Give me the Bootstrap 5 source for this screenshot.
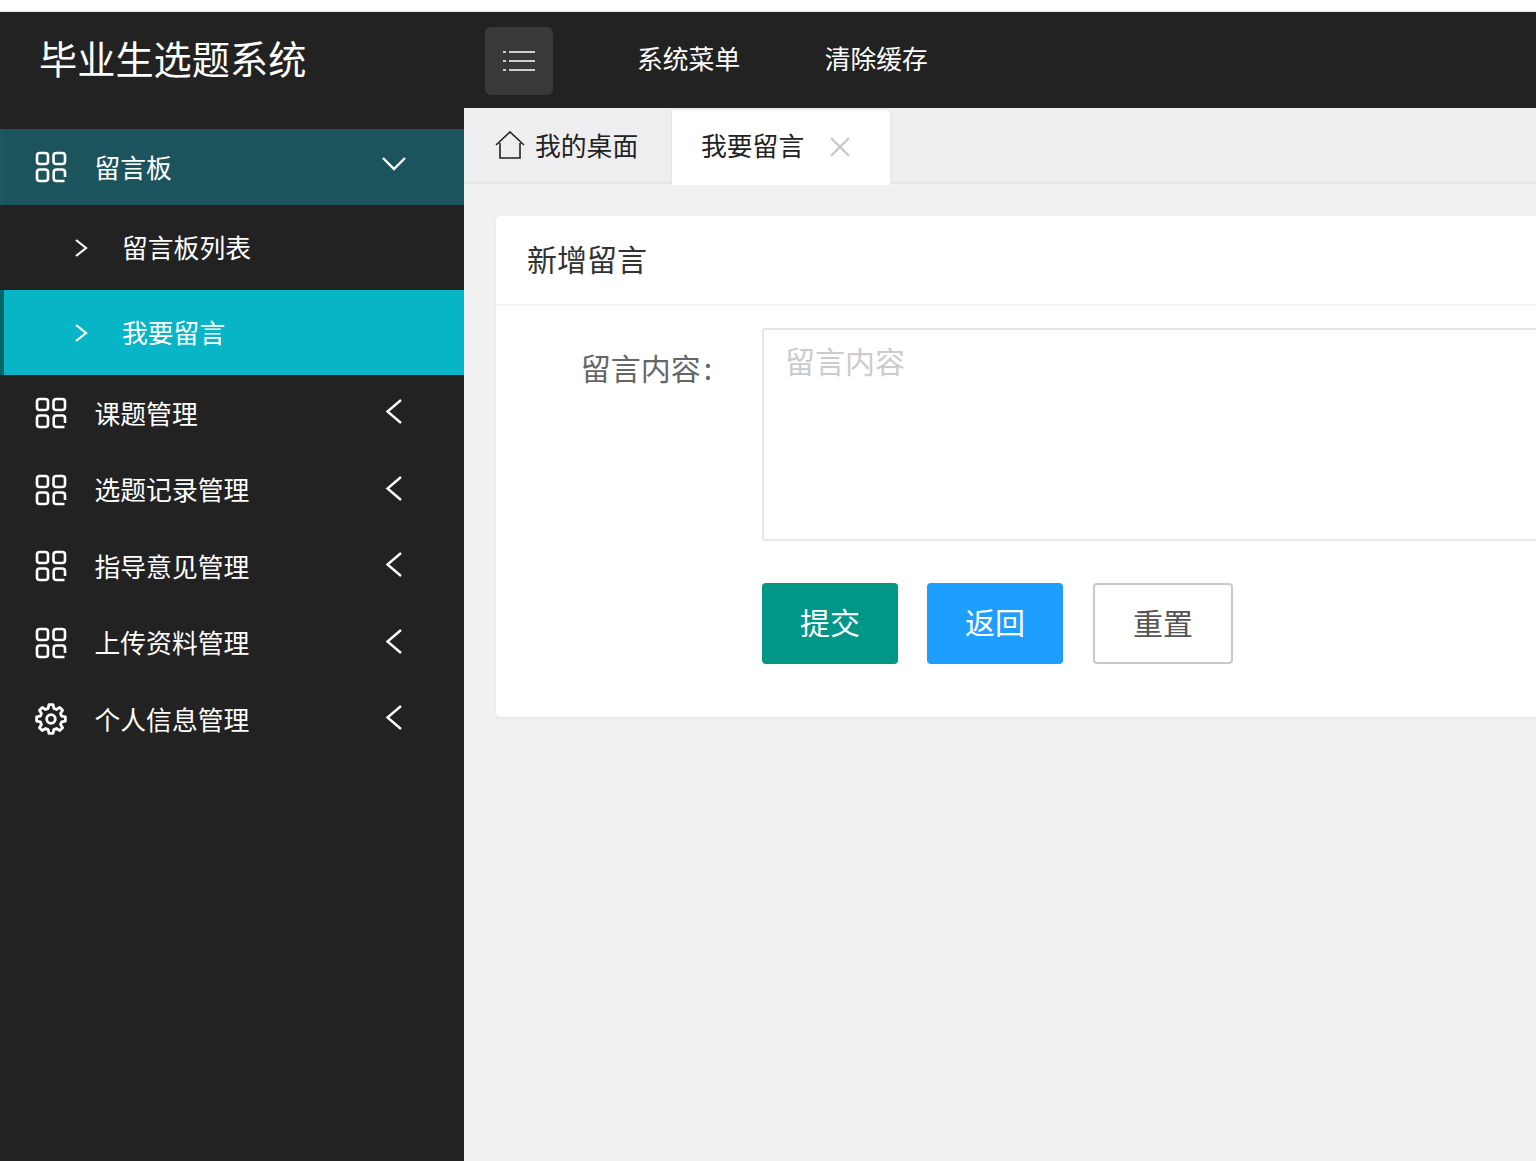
<!DOCTYPE html>
<html lang="zh">
<head>
<meta charset="utf-8">
<title>毕业生选题系统</title>
<link rel="stylesheet" href="https://cdn.jsdelivr.net/npm/bootstrap@5.3.0/dist/css/bootstrap.min.css">
<style>
html,body{height:100%;overflow:hidden;}
body{font-family:"Noto Sans CJK SC","Liberation Sans",sans-serif;background:#f1f1f1;color:#333;}
.top-strip{height:12px;background:#fff;border-bottom:1px solid #e8e8e8;}
.shell{height:1149px;}
.side-col{width:464px;flex:none;background:#222;color:#fff;}
.logo-box{height:117px;padding:18px 0 0 39px;font-size:38.200px;line-height:56px;}
.menu-item{height:76.5px;padding-left:35px;font-size:25.800px;color:#fff;}
.menu-item.is-open{height:76px;background:#1b545c;border-left:4px solid #1a5a58;padding-left:31px;}
.menu-ico{width:32px;height:32px;flex:none;margin-right:27.500px;}
.menu-arrow{width:26px;height:26px;margin-left:auto;margin-right:57px;flex:none;position:relative;top:-2px;}
.is-open .menu-arrow{top:-3px;}
.sub-item{height:85px;padding-left:68px;font-size:25.800px;color:#fff;}
.sub-item.is-cur{background:#08b5c7;border-left:4px solid #006666;padding-left:64px;}
.sub-arrow{width:26px;height:26px;margin-right:28px;flex:none;position:relative;top:-1px;}
.top-bar{height:96px;background:#222;color:#fff;font-size:25.800px;padding-left:21px;}
.tog-btn{width:68px;height:68px;border-radius:6px;background:#393939;margin-right:84px;margin-top:2px;}
.top-link{margin-right:84.500px;position:relative;top:-2px;}
.tab-bar{height:76px;background:#eeeef0;border-bottom:2px solid #e6e6e6;font-size:25.800px;color:#222;}
.tab-home{padding-left:31px;width:207px;}
.tab-home span{margin-left:2px;}
.tab-cur{width:220px;height:76px;background:#fff;border:1.5px solid #e6e6e6;border-bottom:0;border-radius:3px 3px 0 0;padding:0 0 5px 29px;margin-top:1px;}
.tab-close{margin-left:25px;margin-top:4px;}
.pane{padding:32px 0 0 32px;}
.form-panel{margin-right:-20px;border-radius:5px;box-shadow:0 1px 4px rgba(0,0,0,.06);height:501px;background:#fff;}
.panel-head{height:90px;padding:0 0 4px 31px;font-size:30px;border-bottom:2px solid #f4f4f4;color:#333;}
.field-row{padding-top:22px;}
.field-label{width:266px;padding-right:50px;font-size:30px;color:#666;text-align:right;padding-top:12px;line-height:54px;flex:none;}
.colon-mark{margin-left:3px;}
.msg-area{flex:1;height:213px;border:2px solid #e6e6e6;border-radius:3px;padding:4px 21px;font-size:30px;line-height:52px;resize:none;outline:0;display:block;}
.msg-area::placeholder{color:#ccc;}
.act-row{padding:42px 0 0 266px;gap:29px;}
.act-btn{width:136px;height:81px;border-radius:4px;font-size:30px;line-height:1;padding:0 0 6px;color:#fff;border:0;}
.act-ok{background:#009688;}
.act-back{background:#1e9fff;}
.act-reset{width:140px;background:#fff;color:#555;border:2px solid #c9c9c9;margin-left:1px;padding-bottom:3px;}
</style>
</head>
<body>
<svg width="0" height="0" class="d-block"><defs>
<symbol id="i-apps" viewBox="0 0 32 32"><g fill="none" stroke="currentColor" stroke-width="2.600"><rect x="2" y="2" width="11" height="11" rx="2.800"/><rect x="18.500" y="2" width="11.500" height="11" rx="2.800"/><rect x="2" y="18.500" width="11" height="11.500" rx="2.800"/><path d="M29.500 30h-8a2.800 2.800 0 0 1-2.800-2.800v-5.900a2.800 2.800 0 0 1 2.800-2.800h5.700a2.800 2.800 0 0 1 2.800 2.800v4.700"/></g></symbol>
<symbol id="i-left" viewBox="0 0 26 26"><path d="M20 2 6.500 13.500 20 25" fill="none" stroke="currentColor" stroke-width="2.400"/></symbol>
<symbol id="i-gear" viewBox="0 0 32 32"><g fill="none" stroke="currentColor" stroke-width="2.800" stroke-linejoin="round"><circle cx="16" cy="16" r="4.300"/><path d="M13.150 5.370 13.980 1.640H18.020L18.850 5.370 21.500 6.470 24.730 4.420 27.580 7.270 25.530 10.500 26.630 13.150 30.360 13.980V18.020L26.630 18.850 25.530 21.500 27.580 24.730 24.730 27.580 21.500 25.530 18.850 26.630 18.020 30.360H13.980L13.150 26.630 10.500 25.530 7.270 27.580 4.420 24.730 6.470 21.500 5.370 18.850 1.640 18.020V13.980L5.370 13.150 6.470 10.500 4.420 7.270 7.270 4.420 10.500 6.470z"/></g></symbol>
</defs></svg>
<div class="top-strip"></div>
<div class="shell d-flex">
  <aside class="side-col">
    <div class="logo-box">毕业生选题系统</div>
    <a class="menu-item is-open d-flex align-items-center text-decoration-none">
      <svg class="menu-ico"><use href="#i-apps"/></svg><span>留言板</span>
      <svg class="menu-arrow" viewBox="0 0 26 26"><path d="M2 7l11 11L24 7" fill="none" stroke="currentColor" stroke-width="2.400"/></svg>
    </a>
    <a class="sub-item d-flex align-items-center text-decoration-none">
      <svg class="sub-arrow" viewBox="0 0 26 26"><path d="M8 6l10 8-10 8" fill="none" stroke="currentColor" stroke-width="2.200"/></svg><span>留言板列表</span>
    </a>
    <a class="sub-item is-cur d-flex align-items-center text-decoration-none">
      <svg class="sub-arrow" viewBox="0 0 26 26"><path d="M8 6l10 8-10 8" fill="none" stroke="currentColor" stroke-width="2.200"/></svg><span>我要留言</span>
    </a>
    <a class="menu-item d-flex align-items-center text-decoration-none"><svg class="menu-ico"><use href="#i-apps"/></svg><span>课题管理</span><svg class="menu-arrow"><use href="#i-left"/></svg></a>
    <a class="menu-item d-flex align-items-center text-decoration-none"><svg class="menu-ico"><use href="#i-apps"/></svg><span>选题记录管理</span><svg class="menu-arrow"><use href="#i-left"/></svg></a>
    <a class="menu-item d-flex align-items-center text-decoration-none"><svg class="menu-ico"><use href="#i-apps"/></svg><span>指导意见管理</span><svg class="menu-arrow"><use href="#i-left"/></svg></a>
    <a class="menu-item d-flex align-items-center text-decoration-none"><svg class="menu-ico"><use href="#i-apps"/></svg><span>上传资料管理</span><svg class="menu-arrow"><use href="#i-left"/></svg></a>
    <a class="menu-item d-flex align-items-center text-decoration-none"><svg class="menu-ico"><use href="#i-gear"/></svg><span>个人信息管理</span><svg class="menu-arrow"><use href="#i-left"/></svg></a>
  </aside>
  <main class="flex-grow-1 overflow-hidden">
    <div class="top-bar d-flex align-items-center">
      <div class="tog-btn d-flex align-items-center justify-content-center">
        <svg width="32" height="22" viewBox="0 0 32 22"><path d="M0 2h3M6 2h26M0 11h3M6 11h26M0 20h3M6 20h26" fill="none" stroke="#fff" stroke-width="1.700"/></svg>
      </div>
      <span class="top-link">系统菜单</span>
      <span class="top-link">清除缓存</span>
    </div>
    <div class="tab-bar d-flex">
      <div class="tab-home d-flex align-items-center">
        <svg class="me-2" width="30" height="28" viewBox="0 0 30 28"><path d="M1 14 15 1l14 13M5 12v15h20V12" fill="none" stroke="#222" stroke-width="1.600"/></svg>
        <span>我的桌面</span>
      </div>
      <div class="tab-cur d-flex align-items-center">
        <span>我要留言</span>
        <svg class="tab-close" width="22" height="22" viewBox="0 0 22 22"><path d="M2 2l18 18M20 2 2 20" stroke="#c4c4c4" stroke-width="2"/></svg>
      </div>
    </div>
    <div class="pane">
      <form class="form-panel">
        <div class="panel-head d-flex align-items-center">新增留言</div>
        <div class="field-row d-flex">
          <label class="field-label">留言内容<span class="colon-mark">:</span></label>
          <textarea class="msg-area" placeholder="留言内容"></textarea>
        </div>
        <div class="act-row d-flex">
          <button type="button" class="btn act-btn act-ok">提交</button>
          <button type="button" class="btn act-btn act-back">返回</button>
          <button type="button" class="btn act-btn act-reset">重置</button>
        </div>
      </form>
    </div>
  </main>
</div>
<script src="https://cdn.jsdelivr.net/npm/bootstrap@5.3.0/dist/js/bootstrap.bundle.min.js"></script>
</body>
</html>
